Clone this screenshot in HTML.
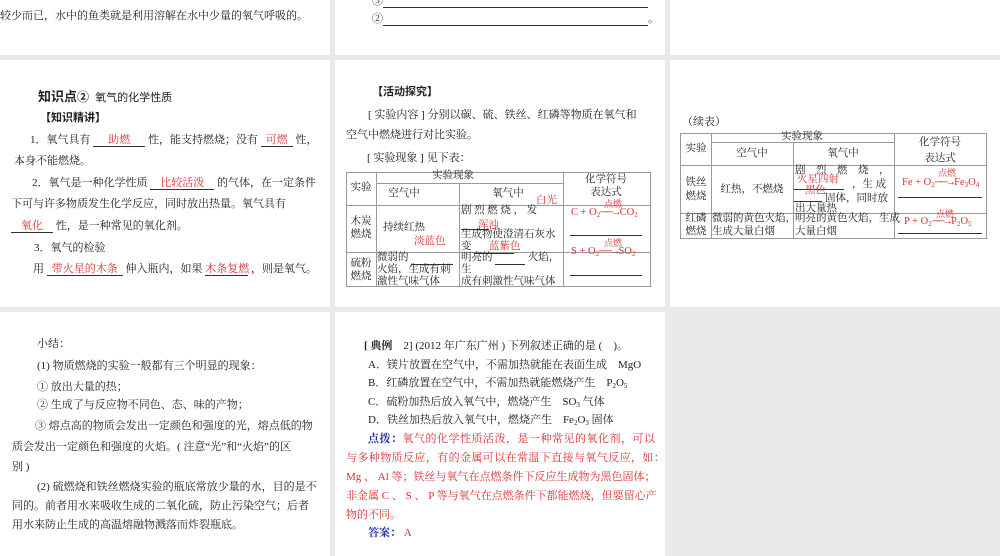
<!DOCTYPE html>
<html><head><meta charset="utf-8"><style>
body{margin:0;width:1000px;height:556px;background:#e9e9e9;position:relative;overflow:hidden;font-family:"Liberation Serif","Noto Serif CJK SC",serif;font-size:11px;color:#222}
.p{position:absolute;background:#fff}
.t{position:absolute;white-space:nowrap;line-height:14px}
.c{position:absolute;white-space:nowrap;line-height:12px;font-size:10.5px}
.m{transform:translateX(-50%)}
.r{color:#d93030}
.u{display:inline-block;border-bottom:1px solid #333;text-align:center;line-height:12px}
.b{font-weight:bold}
.s{font-family:"Liberation Sans","Noto Sans CJK SC",sans-serif}
.ln{position:absolute;background:#999}
.hl{position:absolute;height:1px;background:#333}
sub{font-size:7px;vertical-align:-2px;line-height:0}
.bl{color:#2030b0;font-weight:bold}
.sm{font-size:9px}
</style></head><body>
<div class="p" style="left:0;top:0;width:330px;height:55px"></div>
<div class="p" style="left:335px;top:0;width:330px;height:55px"></div>
<div class="p" style="left:670px;top:0;width:330px;height:55px"></div>
<div class="p" style="left:0;top:60px;width:330px;height:247px"></div>
<div class="p" style="left:335px;top:60px;width:330px;height:247px"></div>
<div class="p" style="left:670px;top:60px;width:330px;height:247px"></div>
<div class="p" style="left:0;top:312px;width:330px;height:244px"></div>
<div class="p" style="left:335px;top:312px;width:330px;height:244px"></div>

<div class="t" style="left:0;top:9px">较少而已，水中的鱼类就是利用溶解在水中少量的氧气呼吸的。</div>
<div class="t" style="left:372px;top:-6px">③<span class="u" style="width:265px">&nbsp;</span></div>
<div class="t" style="left:372px;top:12px">②<span class="u" style="width:265px">&nbsp;</span>。</div>

<div class="t s" style="left:38px;top:90px"><b style="font-size:13px">知识点</b><b style="font-size:12px">②</b>&nbsp;&nbsp;氧气的化学性质</div>
<div class="t s b" style="left:40px;top:111px">【知识精讲】</div>
<div class="t" style="left:30px;top:133px">1．氧气具有 <span class="u r" style="width:52px">助燃</span> 性，能支持燃烧；没有 <span class="u r" style="width:32px">可燃</span> 性，</div>
<div class="t" style="left:14px;top:154px">本身不能燃烧。</div>
<div class="t" style="left:32px;top:176px">2．氧气是一种化学性质 <span class="u r" style="width:64px">比较活泼</span> 的气体，在一定条件</div>
<div class="t" style="left:11px;top:197px">下可与许多物质发生化学反应，同时放出热量。氧气具有</div>
<div class="t" style="left:11px;top:219px"><span class="u r" style="width:42px">氧化</span> 性，是一种常见的氧化剂。</div>
<div class="t" style="left:34px;top:241px">3．氧气的检验</div>
<div class="t" style="left:33px;top:262px">用 <span class="u r" style="width:76px">带火星的木条</span> 伸入瓶内，如果 <span class="u r" style="width:43px">木条复燃</span> ，则是氧气。</div>

<div class="t s b" style="left:372px;top:85px">【活动探究】</div>
<div class="t" style="left:368px;top:108px">[ 实验内容 ] 分别以碳、硫、铁丝、红磷等物质在氧气和</div>
<div class="t" style="left:346px;top:128px">空气中燃烧进行对比实验。</div>
<div class="t" style="left:367px;top:151px">[ 实验现象 ] 见下表：</div>

<!-- table 1 grid -->
<div class="ln" style="left:346px;top:172px;width:305px;height:1px"></div>
<div class="ln" style="left:376px;top:183px;width:187px;height:1px"></div>
<div class="ln" style="left:346px;top:205px;width:305px;height:1px"></div>
<div class="ln" style="left:346px;top:252px;width:305px;height:1px"></div>
<div class="ln" style="left:346px;top:286px;width:305px;height:1px"></div>
<div class="ln" style="left:346px;top:172px;width:1px;height:115px"></div>
<div class="ln" style="left:376px;top:172px;width:1px;height:115px"></div>
<div class="ln" style="left:459px;top:183px;width:1px;height:104px"></div>
<div class="ln" style="left:563px;top:172px;width:1px;height:115px"></div>
<div class="ln" style="left:650px;top:172px;width:1px;height:115px"></div>
<div class="c m" style="left:453px;top:170px">实验现象</div>
<div class="c m" style="left:361px;top:182px">实验</div>
<div class="c m" style="left:404px;top:188px">空气中</div>
<div class="c m" style="left:508px;top:188px">氧气中</div>
<div class="c m" style="left:606px;top:174px">化学符号</div>
<div class="c m" style="left:606px;top:187px">表达式</div>
<div class="c m" style="left:361px;top:216px">木炭</div>
<div class="c m" style="left:361px;top:229px">燃烧</div>
<div class="c m" style="left:404px;top:222px">持续红热</div>
<div class="c r" style="left:414px;top:236px">淡蓝色</div>
<div class="c" style="left:461px;top:205px">剧 烈 燃 烧 ， 发</div>
<div class="c r" style="left:536px;top:195px">白光</div>
<div class="hl" style="left:461px;top:229px;width:28px"></div>
<div class="c r" style="left:478px;top:220px">浑浊</div>
<div class="c" style="left:461px;top:229px">生成物使澄清石灰水</div>
<div class="c" style="left:461px;top:241px">变 <span class="u" style="width:40px">&nbsp;</span></div>
<div class="c r" style="left:489px;top:241px">蓝紫色</div>
<div class="c r" style="left:571px;top:207px">C + O<sub>2</sub><span style="letter-spacing:-2px">──→</span>CO<sub>2</sub></div>
<div class="c r sm" style="left:604px;top:198px">点燃</div>
<div class="hl" style="left:570px;top:235px;width:72px"></div>
<div class="c r" style="left:571px;top:246px">S + O<sub>2</sub><span style="letter-spacing:-2px">──→</span>SO<sub>2</sub></div>
<div class="c r sm" style="left:604px;top:237px">点燃</div>
<div class="hl" style="left:570px;top:275px;width:72px"></div>
<div class="c m" style="left:361px;top:258px">硫粉</div>
<div class="c m" style="left:361px;top:271px">燃烧</div>
<div class="c" style="left:377px;top:252px">微弱的 <span class="u" style="width:42px">&nbsp;</span></div>
<div class="c" style="left:377px;top:264px">火焰，生成有刺</div>
<div class="c" style="left:377px;top:276px">激性气味气体</div>
<div class="c" style="left:461px;top:252px">明亮的 <span class="u" style="width:30px">&nbsp;</span> 火焰，</div>
<div class="c" style="left:461px;top:264px">生</div>
<div class="c" style="left:461px;top:276px">成有刺激性气味气体</div>

<div class="t" style="left:682px;top:115px">（续表）</div>
<!-- table 2 grid -->
<div class="ln" style="left:680px;top:133px;width:306px;height:1px"></div>
<div class="ln" style="left:711px;top:142px;width:183px;height:1px"></div>
<div class="ln" style="left:680px;top:165px;width:306px;height:1px"></div>
<div class="ln" style="left:680px;top:213px;width:306px;height:1px"></div>
<div class="ln" style="left:680px;top:238px;width:306px;height:1px"></div>
<div class="ln" style="left:680px;top:133px;width:1px;height:106px"></div>
<div class="ln" style="left:711px;top:133px;width:1px;height:106px"></div>
<div class="ln" style="left:793px;top:142px;width:1px;height:97px"></div>
<div class="ln" style="left:894px;top:133px;width:1px;height:106px"></div>
<div class="ln" style="left:986px;top:133px;width:1px;height:106px"></div>
<div class="c m" style="left:802px;top:131px">实验现象</div>
<div class="c m" style="left:696px;top:143px">实验</div>
<div class="c m" style="left:752px;top:148px">空气中</div>
<div class="c m" style="left:843px;top:148px">氧气中</div>
<div class="c m" style="left:940px;top:137px">化学符号</div>
<div class="c m" style="left:940px;top:153px">表达式</div>
<div class="c m" style="left:696px;top:177px">铁丝</div>
<div class="c m" style="left:696px;top:191px">燃烧</div>
<div class="c m" style="left:752px;top:184px">红热，不燃烧</div>
<div class="c" style="left:795px;top:165px">剧　烈　燃　烧　，</div>
<div class="c r" style="left:797px;top:174px">火星四射</div>
<div class="c" style="left:852px;top:179px">，生 成</div>
<div class="hl" style="left:794px;top:189px;width:50px"></div>
<div class="c r" style="left:805px;top:185px">黑色</div>
<div class="hl" style="left:794px;top:201px;width:28px"></div>
<div class="c" style="left:825px;top:193px">固体，同时放</div>
<div class="c" style="left:795px;top:203px">出大量热</div>
<div class="c r" style="left:902px;top:177px">Fe + O<sub>2</sub><span style="letter-spacing:-2px">──→</span>Fe<sub>3</sub>O<sub>4</sub></div>
<div class="c r sm" style="left:938px;top:167px">点燃</div>
<div class="hl" style="left:898px;top:197px;width:84px"></div>
<div class="c m" style="left:696px;top:213px">红磷</div>
<div class="c m" style="left:696px;top:226px">燃烧</div>
<div class="c" style="left:712px;top:213px">微弱的黄色火焰，</div>
<div class="c" style="left:712px;top:226px">生成大量白烟</div>
<div class="c" style="left:795px;top:213px">明亮的黄色火焰，生成</div>
<div class="c" style="left:795px;top:226px">大量白烟</div>
<div class="c r" style="left:904px;top:216px">P + O<sub>2</sub><span style="letter-spacing:-2px">──→</span>P<sub>2</sub>O<sub>5</sub></div>
<div class="c r sm" style="left:936px;top:208px">点燃</div>
<div class="hl" style="left:898px;top:233px;width:84px"></div>

<div class="t" style="left:37px;top:337px">小结：</div>
<div class="t" style="left:37px;top:359px">(1) 物质燃烧的实验一般都有三个明显的现象：</div>
<div class="t" style="left:37px;top:380px">① 放出大量的热；</div>
<div class="t" style="left:37px;top:398px">② 生成了与反应物不同色、态、味的产物；</div>
<div class="t" style="left:35px;top:419px">③ 熔点高的物质会发出一定颜色和强度的光，熔点低的物</div>
<div class="t" style="left:12px;top:440px">质会发出一定颜色和强度的火焰。( 注意“光”和“火焰”的区</div>
<div class="t" style="left:12px;top:460px">别 )</div>
<div class="t" style="left:37px;top:480px">(2) 硫燃烧和铁丝燃烧实验的瓶底常放少量的水，目的是不</div>
<div class="t" style="left:12px;top:499px">同的。前者用水来吸收生成的二氧化硫，防止污染空气；后者</div>
<div class="t" style="left:12px;top:518px">用水来防止生成的高温熔融物溅落而炸裂瓶底。</div>

<div class="t" style="left:364px;top:339px"><b>[ 典例</b>　2] (2012 年广东广州 ) 下列叙述正确的是 (　)。</div>
<div class="t" style="left:368px;top:358px">A．镁片放置在空气中，不需加热就能在表面生成　MgO</div>
<div class="t" style="left:368px;top:376px">B．红磷放置在空气中，不需加热就能燃烧产生　P<sub>2</sub>O<sub>5</sub></div>
<div class="t" style="left:368px;top:395px">C．硫粉加热后放入氧气中，燃烧产生　SO<sub>3</sub> 气体</div>
<div class="t" style="left:368px;top:413px">D．铁丝加热后放入氧气中，燃烧产生　Fe<sub>2</sub>O<sub>3</sub> 固体</div>
<div class="t r" style="left:368px;top:432px;letter-spacing:0.5px"><span class="bl">点拨：</span>氧气的化学性质活泼，是一种常见的氧化剂，可以</div>
<div class="t r" style="left:346px;top:451px;letter-spacing:0.4px">与多种物质反应，有的金属可以在常温下直接与氧气反应，如：</div>
<div class="t r" style="left:346px;top:470px">Mg 、 Al 等；铁丝与氧气在点燃条件下反应生成物为黑色固体；</div>
<div class="t r" style="left:346px;top:489px">非金属 C 、 S 、 P 等与氧气在点燃条件下都能燃烧，但要留心产</div>
<div class="t r" style="left:346px;top:508px">物的不同。</div>
<div class="t" style="left:368px;top:526px"><span class="bl">答案：</span> <span class="r">A</span></div>
</body></html>
